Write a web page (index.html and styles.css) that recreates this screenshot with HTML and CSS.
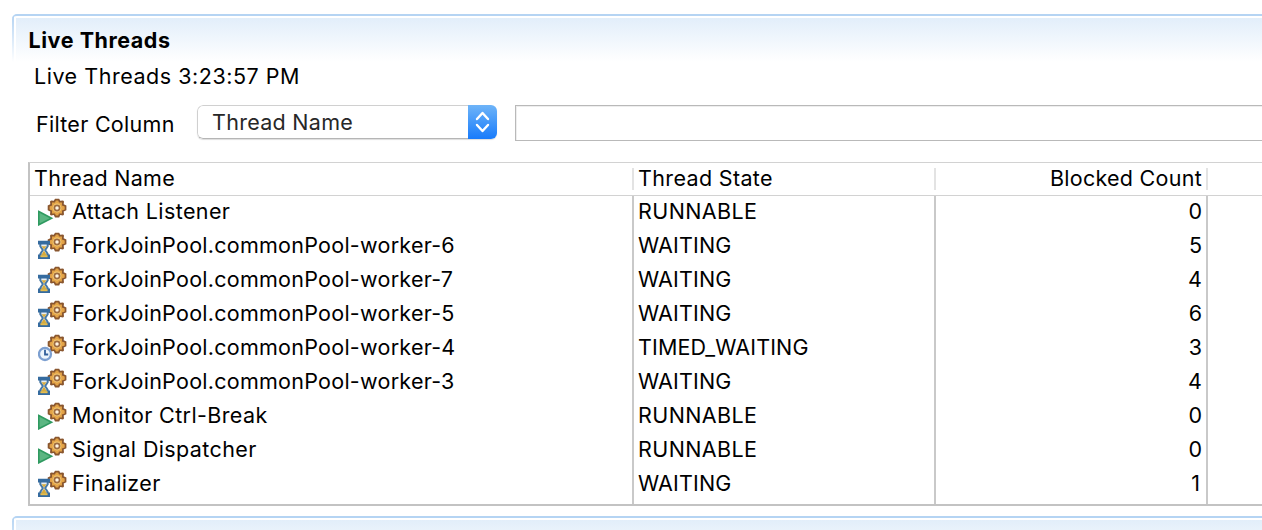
FILE: index.html
```html
<!DOCTYPE html>
<html lang="en">
<head>
<meta charset="utf-8">
<title>Live Threads</title>
<link rel="stylesheet" href="styles.css">
</head>
<body>
<svg class="defs" width="0" height="0">
  <defs>
    <g id="gear">
      <path d="M17 2.7h4.2l1 2.1 2.9-.3.9 1-.3 2.7 2.7 1.4v4.6l-2.7 1.4.3 2.8-1 1-2.8-.3-1 2.5H17l-1.2-2.5-2.8.3-1-1 .3-2.8-2.6-1.4V9.6l2.6-1.4-.3-2.7 1-1 2.8.3z" fill="#89562f"/>
      <path d="M17.9 4.4h2.3l.8 2.2h3l-.1 2.8 2.8 1.2v2.8l-2.8 1.2.1 2.9h-3l-.8 2.1h-2.3l-1-2.1H14l.1-2.9-2.5-1.2v-2.8l2.5-1.2L14 6.6h2.9z" fill="#e3a347"/>
      <circle cx="19" cy="12" r="4.4" fill="#f9d17a"/>
      <circle cx="19" cy="12" r="2.6" fill="#fff4e2" stroke="#9c6a40" stroke-width="1.7"/>
    </g>
    <g id="run"><use href="#gear"/><path d="M.8 15.5 13.6 22.2.8 28.8z" fill="#5bb682" stroke="#2f9a60" stroke-width="1.6"/></g>
    <g id="wait"><use href="#gear"/>
      <path d="M2.3 13h7.4v3.2L7.2 20l2.5 4v2H2.3v-2l2.5-4-2.5-3.8z" fill="#e7edf2" stroke="#4778a5" stroke-width="2"/>
      <path d="M0 10.8h12v3.7H0zM0 24.6h12V29H0z" fill="#356b9f"/>
      <path d="M3.5 16.2h5L6 19.6zM6 20.5l3 5H3z" fill="#d7ab3c"/>
      <path d="M2.4 26.2h7.2" stroke="#e6bd4d" stroke-width="2"/>
    </g>
    <g id="timed"><use href="#gear"/><circle cx="7" cy="22" r="6" fill="#edf5fc" stroke="#7c9fd0" stroke-width="2.3"/><path d="M7 17.8v4.7h3.2" fill="none" stroke="#315f9b" stroke-width="1.8"/></g>
  </defs>
</svg>
<section class="section">
  <h1 class="title">Live Threads</h1>
  <p class="time">Live Threads 3:23:57 PM</p>
  <div class="filter">
    <span class="label">Filter Column</span>
    <div class="select"><span class="value">Thread Name</span><span class="arrows"><svg width="29" height="34" viewBox="0 0 29 34"><path d="m9 14 5.5-6 5.5 6M9 20l5.5 6 5.5-6" fill="none" stroke="#fff" stroke-width="2.4" stroke-linecap="round" stroke-linejoin="round"/></svg></span></div>
    <div class="input"></div>
  </div>
  <div class="table">
    <div class="row head"><div class="c1">Thread Name</div><div class="c2">Thread State</div><div class="c3">Blocked Count</div></div>
    <div class="rows">
      <div class="row"><div class="c1"><svg class="icon" viewBox="0 0 30 30"><use href="#run"/></svg><span>Attach Listener</span></div><div class="c2 run">RUNNABLE</div><div class="c3">0</div></div>
      <div class="row"><div class="c1"><svg class="icon" viewBox="0 0 30 30"><use href="#wait"/></svg><span class="pool">ForkJoinPool.commonPool-worker-6</span></div><div class="c2">WAITING</div><div class="c3">5</div></div>
      <div class="row"><div class="c1"><svg class="icon" viewBox="0 0 30 30"><use href="#wait"/></svg><span class="pool">ForkJoinPool.commonPool-worker-7</span></div><div class="c2">WAITING</div><div class="c3">4</div></div>
      <div class="row"><div class="c1"><svg class="icon" viewBox="0 0 30 30"><use href="#wait"/></svg><span class="pool">ForkJoinPool.commonPool-worker-5</span></div><div class="c2">WAITING</div><div class="c3">6</div></div>
      <div class="row"><div class="c1"><svg class="icon" viewBox="0 0 30 30"><use href="#timed"/></svg><span class="pool">ForkJoinPool.commonPool-worker-4</span></div><div class="c2">TIMED_WAITING</div><div class="c3">3</div></div>
      <div class="row"><div class="c1"><svg class="icon" viewBox="0 0 30 30"><use href="#wait"/></svg><span class="pool">ForkJoinPool.commonPool-worker-3</span></div><div class="c2">WAITING</div><div class="c3">4</div></div>
      <div class="row"><div class="c1"><svg class="icon" viewBox="0 0 30 30"><use href="#run"/></svg><span>Monitor Ctrl-Break</span></div><div class="c2 run">RUNNABLE</div><div class="c3">0</div></div>
      <div class="row"><div class="c1"><svg class="icon" viewBox="0 0 30 30"><use href="#run"/></svg><span>Signal Dispatcher</span></div><div class="c2 run">RUNNABLE</div><div class="c3">0</div></div>
      <div class="row"><div class="c1"><svg class="icon" viewBox="0 0 30 30"><use href="#wait"/></svg><span>Finalizer</span></div><div class="c2">WAITING</div><div class="c3 one">1</div></div>
    </div>
  </div>
</section>
<section class="section next"></section>
</body>
</html>
```
FILE: styles.css
```css
* { box-sizing: border-box; }
body { margin: 0; padding: 14px 0 0 12px; height: 530px; overflow: hidden; background: #fff; color: #000; font: 21.5px/30px Inter, "Liberation Sans", sans-serif; }
.defs { display: block; height: 0; }
.section { height: 502px; padding-left: 16px; border-top: 2px solid #b5d4f3; border-top-left-radius: 5px; background: linear-gradient(#b5d4f3, #fff) 0 0 / 2px 46px no-repeat, linear-gradient(#fff, #fff) 0 0 / 100% 2px no-repeat, linear-gradient(#fff, #fff) 2px 0 / 2px 46px no-repeat, linear-gradient(#e2eefa, #fff) 4px 2px / 100% 44px no-repeat; }
.title { margin: 0; padding: 9px 0 0 .5px; height: 45px; font-size: 21.5px; line-height: 30px; font-weight: 700; letter-spacing: .55px; }
.time { margin: 0 0 0 6px; height: 44px; letter-spacing: .53px; }
.filter { display: flex; height: 57px; padding-left: 8px; letter-spacing: .28px; }
.label { width: 161px; padding-top: 4px; }
.select { display: flex; width: 300px; height: 34px; border-radius: 6px; overflow: hidden; box-shadow: 0 1px 1px #ddd; }
.value { flex: 1; padding: 1px 0 0 14px; border: 1px solid #d0d0d0; border-bottom-color: #b5b5b5; border-right: 0; border-radius: 6px 0 0 6px; color: #272727; }
.arrows { width: 29px; height: 34px; background: linear-gradient(#6eb4f8, #187bfb); }
.arrows svg { display: block; }
.input { flex: 1; height: 36px; margin-left: 18px; border: 1px solid #b9b9b9; border-right: 0; box-shadow: inset 1px 1px #eee; }
.table { height: 344px; border-top: 1px solid #d2d2d2; border-left: 2px solid #c3c3c3; border-bottom: 2px solid #c3c3c3; }
.row { display: grid; grid-template-columns: 604px 302px 272px; height: 34px; }
.head { height: 33px; border-bottom: 1px solid #d2d2d2; letter-spacing: .27px; }
.head > div { height: 22px; margin-top: 5px; line-height: 20px; border-right: 2px solid #e3e3e3; }
.c1 { display: flex; padding-left: 8px; border-right: 2px solid #c9c9c9; }
.c1 span { letter-spacing: .38px; }
.c1 .pool { letter-spacing: .26px; }
.head .c1 { padding-left: 4px; }
.c2 { padding-left: 4px; letter-spacing: .13px; border-right: 2px solid #c9c9c9; }
.c2.run { letter-spacing: .4px; }
.head .c2 { letter-spacing: .35px; }
.c3 { padding-right: 4px; text-align: right; border-right: 2px solid #c9c9c9; }
.c3.one { padding-right: 6px; }
.icon { width: 30px; height: 30px; margin-right: 4px; }
.rows { height: 308px; overflow: hidden; }
.rows .row:last-child { height: 36px; }
.next { height: 30px; }
```
